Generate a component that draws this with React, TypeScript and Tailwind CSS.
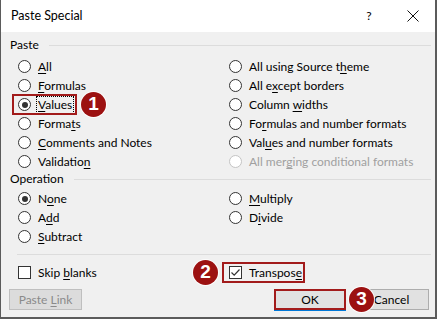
import React from "react";

const Radio = ({ checked = false, disabled = false }: { checked?: boolean; disabled?: boolean }) => (
  <span
    className={
      "w-[13px] h-[13px] rounded-full border bg-white flex items-center justify-center shrink-0 " +
      (disabled ? "border-[#c4c4c4]" : "border-[#333333]")
    }
  >
    {checked && <span className="w-[6px] h-[6px] rounded-full bg-[#333333]"></span>}
  </span>
);

const Check = ({ checked = false }: { checked?: boolean }) => (
  <span className="w-[13px] h-[13px] border border-[#333333] bg-white flex items-center justify-center shrink-0">
    {checked && (
      <svg width="11" height="11" viewBox="0 0 11 11">
        <path d="M1.5 5.5 L4.2 8.2 L9.5 2.5" fill="none" stroke="#333333" strokeWidth="1.2" />
      </svg>
    )}
  </span>
);

const Badge = ({ n, className }: { n: string; className: string }) => (
  <span
    className={
      "absolute w-[25px] h-[25px] rounded-full bg-[#9c1111] text-white flex items-center justify-center text-[19px] font-bold shadow-[0_0_0_1px_rgba(255,255,255,0.8)] " +
      className
    }
    style={{ fontFamily: "'Liberation Sans', Arial, sans-serif" }}
  >
    {n}
  </span>
);

// text with one underlined mnemonic letter
const L = ({ pre, u, post }: { pre: string; u: string; post: string }) => (
  <span className="whitespace-pre pt-px">
    {pre}
    <span className="underline underline-offset-[2px] decoration-1">{u}</span>
    {post}
  </span>
);

const Row = ({ children, disabled = false }: { children: React.ReactNode; disabled?: boolean }) => (
  <div className={"relative h-[19px] flex items-center gap-[7px] " + (disabled ? "text-[#a0a0a0]" : "")}>
    {children}
  </div>
);

const GroupHeader = ({ title, h }: { title: string; h: string }) => (
  <div className={"flex items-center gap-[10px] " + h}>
    <span>{title}</span>
    <span className="flex-1 h-px bg-[#dcdcdc]"></span>
  </div>
);

export default function App() {
  return (
    <div
      className="w-[438px] h-[320px] bg-white text-[12px] text-black overflow-hidden"
      style={{ fontFamily: "Lato, 'Noto Sans', sans-serif" }}
    >
      <div className="w-[437px] h-[319px] border-l border-r-2 border-b-2 border-[#5b5b5b] flex flex-col">
        {/* Title bar */}
        <div className="h-[32px] bg-white flex items-center pl-[10px] shrink-0">
          <span className="flex-1 text-[12.5px]">Paste Special</span>
          <span className="w-[12px] text-center mr-[32px]">?</span>
          <svg width="12" height="12" viewBox="0 0 12 12" className="mr-[16px]">
            <path d="M0.5 0.5 L11.5 11.5 M11.5 0.5 L0.5 11.5" stroke="#111" strokeWidth="1" />
          </svg>
        </div>

        {/* Body */}
        <div className="flex-1 bg-[#f0f0f0] pl-[9px] pr-[4px] pt-[4px]">
          <GroupHeader title="Paste" h="h-[18px]" />
          <div className="grid grid-cols-[211px_1fr] pl-[8px] mt-[3px]">
            <div className="flex flex-col">
              <Row><Radio /><L pre="" u="A" post="ll" /></Row>
              <Row><Radio /><L pre="" u="F" post="ormulas" /></Row>
              <Row>
                <Radio checked />
                <span className="-ml-[2px] px-[1px] border border-dotted border-black leading-[16px]">
                  <L pre="" u="V" post="alues" />
                </span>
                <span className="absolute left-[-6px] top-[-1px] w-[65px] h-[21px] border-2 border-[#a21b1b]"></span>
                <Badge n="1" className="left-[63px] top-[-3px]" />
              </Row>
              <Row><Radio /><L pre="Forma" u="t" post="s" /></Row>
              <Row><Radio /><L pre="" u="C" post="omments and Notes" /></Row>
              <Row><Radio /><L pre="Validatio" u="n" post="" /></Row>
            </div>
            <div className="flex flex-col">
              <Row><Radio /><L pre="All using Source t" u="h" post="eme" /></Row>
              <Row><Radio /><L pre="All e" u="x" post="cept borders" /></Row>
              <Row><Radio /><L pre="Column " u="w" post="idths" /></Row>
              <Row><Radio /><L pre="Fo" u="r" post="mulas and number formats" /></Row>
              <Row><Radio /><L pre="Val" u="u" post="es and number formats" /></Row>
              <Row disabled><Radio disabled /><L pre="All mer" u="g" post="ing conditional formats" /></Row>
            </div>
          </div>

          <GroupHeader title="Operation" h="h-[16px]" />
          <div className="grid grid-cols-[211px_1fr] pl-[8px] mt-[2px]">
            <div className="flex flex-col">
              <Row><Radio checked /><L pre="N" u="o" post="ne" /></Row>
              <Row><Radio /><L pre="A" u="d" post="d" /></Row>
              <Row><Radio /><L pre="" u="S" post="ubtract" /></Row>
            </div>
            <div className="flex flex-col">
              <Row><Radio /><L pre="" u="M" post="ultiply" /></Row>
              <Row><Radio /><L pre="D" u="i" post="vide" /></Row>
            </div>
          </div>

          <div className="ml-[7px] mt-[8px] h-px bg-[#dcdcdc]"></div>

          <div className="grid grid-cols-[211px_1fr] pl-[8px] mt-[6px]">
            <div className="h-[22px] flex items-center gap-[7px]">
              <Check /><L pre="Skip " u="b" post="lanks" />
            </div>
            <div className="relative h-[22px] flex items-center gap-[7px]">
              <Check checked /><L pre="Transpos" u="e" post="" />
              <span className="absolute left-[-7px] top-[1px] w-[83px] h-[21px] border-2 border-[#a21b1b]"></span>
              <Badge n="2" className="left-[-36px] top-[-1px]" />
            </div>
          </div>

          <div className="mt-[6px] flex items-center justify-between pr-[2px]">
            <div className="-ml-[1px] w-[73px] h-[21px] border border-[#bfbfbf] bg-[#dcdcdc] text-[#8a8a8a] flex items-center justify-center">
              <L pre="Paste " u="L" post="ink" />
            </div>
            <div className="relative flex items-center gap-[8px]">
              <div className="w-[72px] h-[21px] border-2 border-[#a21b1b] bg-[#e1e1e1] flex items-center justify-center shadow-[0_1px_0_#0078d7]">
                OK
              </div>
              <div className="w-[75px] h-[21px] border border-[#adadad] bg-[#e1e1e1] flex items-center justify-center">
                Cancel
              </div>
              <Badge n="3" className="left-[75px] top-[-2px]" />
            </div>
          </div>
        </div>
      </div>
    </div>
  );
}
